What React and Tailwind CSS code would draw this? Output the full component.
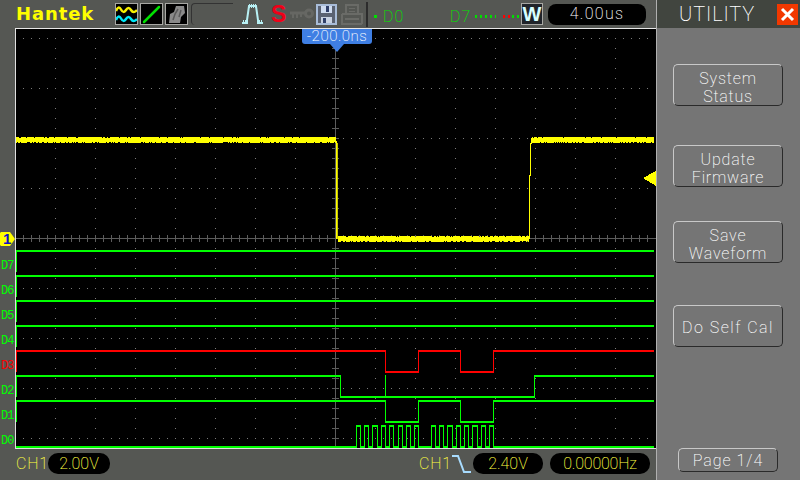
import React from "react";

const GREEN = "#00ff00";
const RED = "#ff0000";
const YEL = "#ffff00";

function rng(seed) {
  let s = seed;
  return () => {
    s = (s * 1664525 + 1013904223) % 4294967296;
    return s / 4294967296;
  };
}

function Trace({ y0, y1, edges, start = 16, end = 653, color = GREEN, startHigh = true }) {
  const out = [];
  let high = startHigh;
  let x = start;
  const pts = [...edges, end];
  pts.forEach((e, i) => {
    out.push(<rect key={"h" + i} x={x} y={(high ? y0 : y1) - 1} width={e - x + 1} height={2} fill={color} />);
    if (i < edges.length) {
      out.push(<rect key={"v" + i} x={e} y={y0 - 1} width={1} height={y1 - y0 + 2} fill={color} />);
    }
    x = e;
    high = !high;
  });
  return <g>{out}</g>;
}

function Noise({ x0, x1, top, bottom, seed, up = 1, pUp = 0.15, pDown = 0.25 }) {
  const r = rng(seed);
  const out = [];
  for (let x = x0; x < x1; x += 1) {
    const a = r();
    const b = r();
    if (a > pUp) out.push(<rect key={"a" + x} x={x} y={top - up} width={1} height={up} fill={YEL} />);
    if (b > pDown) out.push(<rect key={"b" + x} x={x} y={bottom} width={1} height={1} fill={YEL} />);
  }
  return (
    <g>
      <rect x={x0} y={top} width={x1 - x0} height={bottom - top} fill={YEL} />
      {out}
    </g>
  );
}

function Scope() {
  const dots = [];
  for (let y = 38; y <= 438; y += 50) {
    for (let x = 23; x < 654; x += 8) {
      dots.push(<rect key={`h${x}-${y}`} x={x} y={y} width={1} height={1} fill="#7a7a7a" />);
    }
  }
  for (let x = 55; x < 654; x += 40) {
    for (let y = 38; y < 448; y += 10) {
      dots.push(<rect key={`v${x}-${y}`} x={x} y={y} width={1} height={1} fill="#7a7a7a" />);
    }
  }
  const vt = [];
  for (let y = 38; y < 448; y += 10) vt.push(<rect key={"vt" + y} x={332} y={y} width={7} height={1} fill="#5c5c5c" />);
  const ht = [];
  for (let x = 23; x < 654; x += 8) ht.push(<rect key={"ht" + x} x={x} y={235} width={1} height={7} fill="#5c5c5c" />);
  const pulses = [
    356, 360, 364, 368, 372, 377, 381, 385, 389, 393, 398, 402, 406, 410, 414, 418,
    431, 435, 439, 443, 447, 452, 456, 460, 464, 468, 472, 477, 481, 485, 489, 493,
  ];
  const rows = [251, 276, 301, 326];
  return (
    <svg viewBox="16 29 640 419" width="640" height="419" shapeRendering="crispEdges" className="block">
      <rect x="16" y="29" width="640" height="419" fill="#000" />
      {dots}
      <rect x="335" y="29" width="1" height="419" fill="#5c5c5c" />
      {vt}
      <rect x="16" y="238" width="640" height="1" fill="#5c5c5c" />
      {ht}

      <Noise x0={16} x1={336} top={138} bottom={142} seed={11} />
      <rect x="336" y="141" width="1" height="98" fill={YEL} />
      <rect x="337" y="143" width="1" height="96" fill="#c8c800" />
      <Noise x0={338} x1={529} top={237} bottom={241} seed={29} />
      <rect x="529" y="175" width="1" height="64" fill={YEL} />
      <rect x="530" y="143" width="1" height="33" fill={YEL} />
      <rect x="531" y="138" width="1" height="6" fill={YEL} />
      <Noise x0={532} x1={654} top={138} bottom={142} seed={47} />
      <polygon points="643,178 656,171 656,186" fill={YEL} />

      {rows.map((y) => (
        <g key={y}>
          <rect x="16" y={y - 1} width="638" height="2" fill={GREEN} />
          <rect x="16" y={y - 1} width="1" height="22" fill={GREEN} />
        </g>
      ))}
      <rect x="16" y="350" width="1" height="22" fill={RED} />
      <Trace y0={351} y1={372} edges={[385, 418, 460, 493]} color={RED} />
      <rect x="16" y="375" width="1" height="22" fill={GREEN} />
      <rect x="385" y="375" width="1" height="22" fill={GREEN} />
      <Trace y0={376} y1={397} edges={[340, 534]} />
      <rect x="16" y="400" width="1" height="22" fill={GREEN} />
      <Trace y0={401} y1={422} edges={[385, 418, 460, 493]} />
      <Trace y0={426} y1={447} edges={pulses} startHigh={false} />
    </svg>
  );
}

function Waves() {
  return (
    <svg width="21" height="19" viewBox="0 0 21 19" fill="none" strokeWidth="2.5">
      <path d="M0 6 Q2.5 0 5 4.5 T10 5 T15 5 T21 5" stroke="#f8f000" />
      <path d="M0 15 Q2.5 9 5 13.5 T10 14 T15 14 T21 14" stroke="#00e8f8" />
    </svg>
  );
}

function IconBox({ children }) {
  return (
    <div className="w-[23px] h-[22px] border border-[#a8a8a4] bg-black flex items-center justify-center shrink-0">
      {children}
    </div>
  );
}

function Pulse() {
  return (
    <svg width="23" height="22" viewBox="0 0 23 22" fill="none" shapeRendering="crispEdges" className="shrink-0">
      <path d="M1 20H6V17L8 3H15L17 17V20H22" stroke="#b8f0f4" strokeWidth="2" shapeRendering="auto" />
      <path d="M2 17v4M4 17v4M8 1v4M10 1v4M12 1v4M14 1v4M18 17v4M20 17v4" stroke="#b8f0f4" strokeWidth="1" />
    </svg>
  );
}

function Key() {
  return (
    <svg width="24" height="12" viewBox="0 0 24 12" fill="none" className="shrink-0">
      <path d="M0 5H16" stroke="#666763" strokeWidth="3" />
      <path d="M3 6v4M7 6v4M11 6v3" stroke="#666763" strokeWidth="2" />
      <circle cx="19" cy="5.5" r="3.5" stroke="#666763" strokeWidth="3" />
    </svg>
  );
}

function Floppy() {
  return (
    <svg width="21" height="21" viewBox="0 0 21 21" fill="none" shapeRendering="crispEdges" className="shrink-0">
      <rect x="1" y="1" width="19" height="19" fill="#5a6272" stroke="#a8bcd8" strokeWidth="2" />
      <rect x="5" y="2" width="11" height="7" fill="#cfdcf0" />
      <rect x="10" y="2" width="3" height="6" fill="#30406a" />
      <rect x="5" y="13" width="11" height="6" fill="#c8d2e2" />
      <rect x="7" y="14" width="3" height="5" fill="#30406a" />
    </svg>
  );
}

function Printer() {
  return (
    <svg width="22" height="22" viewBox="0 0 22 22" fill="none" shapeRendering="crispEdges" className="shrink-0">
      <path d="M5 10V2H17V10" stroke="#6a6b67" strokeWidth="2" />
      <path d="M8 5H14M8 8H14" stroke="#6a6b67" />
      <rect x="1" y="11" width="20" height="10" rx="1" stroke="#6a6b67" strokeWidth="2" />
      <path d="M4 16H18" stroke="#6a6b67" strokeWidth="2" />
    </svg>
  );
}

function Btn({ lines, cls = "" }) {
  return (
    <div
      className={
        "w-[110px] rounded-[5px] border border-t-[#c8c8c8] border-l-[#c8c8c8] border-r-[#2a2a2a] border-b-[#2a2a2a] flex flex-col items-center justify-center text-white text-[16px] leading-[18px] font-[200] " +
        cls
      }
    >
      {lines.map((l) => (
        <span key={l}>{l}</span>
      ))}
    </div>
  );
}

function DotRow() {
  return (
    <div className="w-[44px] flex gap-[3px] shrink-0">
      {[0, 1, 2, 3, 4].map((i) => (
        <span key={i} className="w-[2px] h-[3px] bg-[#00e000]" />
      ))}
      <span className="w-[1px]" />
      <span className="w-[2px] h-[3px] bg-[#ff0000]" />
      <span className="w-[2px] h-[3px] bg-[#ff0000]" />
      <span className="w-[2px] h-[3px] bg-[#00e000] -ml-[1px]" />
      <span className="w-[2px] h-[3px] bg-[#00e000]" />
    </div>
  );
}

export default function App() {
  return (
    <div
      className="w-[800px] h-[480px] flex overflow-hidden bg-[#555753]"
      style={{ fontFamily: '"Roboto", "Liberation Sans", sans-serif' }}
    >
      <div className="w-[656px] flex flex-col shrink-0">
        {/* top bar */}
        <div className="h-[28px] flex items-center shrink-0">
          <span
            className="ml-[16px] w-[80px] text-[#ffff00] text-[18px] font-bold tracking-[0.9px] leading-none shrink-0"
            style={{ fontFamily: '"DejaVu Sans", sans-serif' }}
          >
            Hantek
          </span>
          <div className="ml-[19px] flex gap-[2px] shrink-0">
            <IconBox>
              <Waves />
            </IconBox>
            <IconBox>
              <svg width="19" height="19" viewBox="0 0 19 19">
                <path d="M2 17L17 2" stroke="#00e000" strokeWidth="2.5" strokeLinecap="round" />
              </svg>
            </IconBox>
            <IconBox>
              <svg width="19" height="19" viewBox="0 0 19 19">
                <path d="M2 18L3 9L7 7L9 1H17L18 8L14 12L13 18Z" fill="#8a8a8a" />
                <path d="M6 15L8 9L11 4M14 5L12 12" stroke="#5a5a5a" strokeWidth="1.5" fill="none" />
              </svg>
            </IconBox>
          </div>
          <div className="ml-[3px] w-[42px] h-[22px] rounded-tl-[4px] rounded-bl-[4px] border-t border-l border-[#333333] shrink-0" />
          <div className="ml-[8px] flex items-center shrink-0">
            <Pulse />
            <span
              className="ml-[7px] w-[12px] text-[#f00018] text-[23px] font-bold leading-none"
              style={{ fontFamily: '"Liberation Sans", sans-serif' }}
            >
              S
            </span>
            <span className="w-[7px]" />
            <Key />
            <span className="w-[2px]" />
            <Floppy />
            <span className="w-[4px]" />
            <Printer />
          </div>
          <div className="ml-[3px] w-[2px] h-[25px] bg-[#2c2c2c] shrink-0" />
          <span className="ml-[6px] w-[3px] h-[3px] bg-[#00e000] mt-[5px] shrink-0" />
          <span className="ml-[6px] w-[20px] text-[#00e000] text-[16px] font-[200] tracking-[1px] mt-[5px] leading-none shrink-0">D0</span>
          <span className="ml-[47px] w-[20px] text-[#00e000] text-[16px] font-[200] tracking-[1px] mt-[5px] leading-none shrink-0">D7</span>
          <div className="ml-[5px] mt-[4px]">
            <DotRow />
          </div>
          <div
            className="ml-[2px] w-[22px] h-[22px] bg-[#20242a] border border-[#a8a8a4] flex items-center justify-center text-[#d8ffff] text-[20px] font-bold leading-none shrink-0"
            style={{ fontFamily: '"Liberation Sans", sans-serif' }}
          >
            W
          </div>
          <div className="ml-[5px] w-[98px] h-[21px] bg-black rounded-[8px] flex items-center justify-center text-white text-[16px] font-[200] tracking-[1.3px] shrink-0">
            4.00us
          </div>
        </div>
        <div className="ml-[15px] h-[1px] bg-[#e8e8e8] shrink-0" />

        {/* middle */}
        <div className="flex h-[419px] shrink-0">
          <div className="w-[16px] border-r border-[#e0e0e0] pt-[203px] shrink-0">
            <div className="relative w-[15px] h-[14px]">
              <svg width="15" height="14" viewBox="0 0 15 14" className="absolute left-0 top-0">
                <path d="M1 0H10L15 7L10 14H1L0 13V1Z" fill="#ffff00" />
              </svg>
              <span
                className="absolute left-[3px] top-[-1px] text-[#1010c8] text-[15px] font-bold leading-[16px]"
                style={{ fontFamily: '"Liberation Sans", sans-serif' }}
              >
                1
              </span>
            </div>
            <div className="mt-[7px] pl-[1px] flex flex-col" style={{ fontFamily: '"Liberation Mono", monospace' }}>
              {["D7", "D6", "D5", "D4", "D3", "D2", "D1", "D0"].map((d) => (
                <span
                  key={d}
                  className={
                    "h-[25px] flex items-center text-[12px] leading-none tracking-[-1px] " +
                    (d === "D3" ? "text-[#ff0000]" : "text-[#00ff00]")
                  }
                >
                  {d}
                </span>
              ))}
            </div>
          </div>
          <div className="relative w-[640px]">
            <Scope />
            <div className="absolute left-[286px] top-0 w-[70px] h-[15px] bg-[#3f7fe4] rounded-b-[3px] flex items-center justify-center text-white text-[15px] font-[200] tracking-[0.5px] leading-none">
              -200.0ns
            </div>
            <svg width="14" height="8" viewBox="0 0 14 8" className="absolute left-[314px] top-[15px]">
              <path d="M0 0H14L7 8Z" fill="#3f7fe4" />
            </svg>
          </div>
        </div>
        <div className="ml-[15px] h-[1px] bg-[#e0e0e0] shrink-0" />

        {/* bottom bar */}
        <div className="flex-1 flex items-center pb-[2px]">
          <span className="ml-[16px] w-[30px] text-[#ffff40] text-[16px] font-[200] tracking-[0.8px] leading-none">CH1</span>
          <div className="ml-[2px] w-[62px] h-[21px] bg-black rounded-[10px] flex items-center justify-center text-[#ffff40] text-[16px] font-[200]">
            2.00V
          </div>
          <span className="ml-[309px] w-[30px] text-[#ffff40] text-[16px] font-[200] tracking-[0.8px] leading-none">CH1</span>
          <svg width="19" height="20" viewBox="0 0 19 20" fill="none" className="ml-[3px] shrink-0">
            <path d="M0 2H6L12 18H19" stroke="#a8dcff" strokeWidth="2" />
          </svg>
          <div className="ml-[2px] w-[70px] h-[21px] bg-black rounded-[10px] flex items-center justify-center text-[#ffff40] text-[16px] font-[200]">
            2.40V
          </div>
          <div className="ml-[7px] w-[100px] h-[21px] bg-black rounded-[10px] flex items-center justify-center text-[#ffff40] text-[16px] font-[200] tracking-[-0.2px]">
            0.00000Hz
          </div>
        </div>
      </div>

      {/* right panel */}
      <div className="flex-1 flex flex-col border-l border-[#b0b0b0] bg-[#757575]">
        <div className="h-[28px] bg-[#41453f] flex items-center shrink-0">
          <span className="ml-[22px] w-[98px] text-white text-[20px] font-[200] tracking-[0.9px] leading-none">UTILITY</span>
          <span className="w-[21px] h-[21px] bg-[#f23800] flex items-center justify-center">
            <svg width="15" height="15" viewBox="0 0 15 15">
              <path d="M2 2L13 13M13 2L2 13" stroke="#fff" strokeWidth="3" />
            </svg>
          </span>
        </div>
        <div className="flex-1 flex flex-col items-center pl-[1px] pr-[2px]">
          <Btn lines={["System", "Status"]} cls="mt-[36px] h-[42px] pt-[5px] tracking-[0.8px]" />
          <Btn lines={["Update", "Firmware"]} cls="mt-[39px] h-[42px] pt-[5px] tracking-[0.8px]" />
          <Btn lines={["Save", "Waveform"]} cls="mt-[34px] h-[42px] pt-[5px] tracking-[0.8px]" />
          <Btn lines={["Do Self Cal"]} cls="mt-[42px] h-[42px] pt-[3px] tracking-[1.5px]" />
          <Btn lines={["Page 1/4"]} cls="mt-auto mb-[8px] !w-[100px] h-[24px] pt-[1px] tracking-[1px]" />
        </div>
      </div>
    </div>
  );
}
